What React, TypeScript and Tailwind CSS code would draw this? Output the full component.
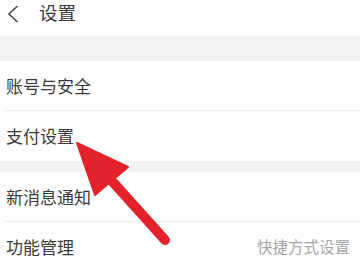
const rowText = 'text-[17px] text-[#3a3a3a]';

function Row({ label, right, divider }: { label: string; right?: string; divider?: boolean }) {
  return (
    <div className="flex h-[50px] flex-col">
      <div className="flex flex-1 items-center justify-between pl-[6px] pr-[10px]">
        <span className={rowText}>{label}</span>
        {right && <span className="text-[15.5px] text-[#a6a6a6]">{right}</span>}
      </div>
      {divider && <div className="ml-[5px] h-px bg-[#ececec]" />}
    </div>
  );
}

export default function App() {
  return (
    <div
      className="relative h-[270px] w-[360px] overflow-hidden bg-white"
      style={{ fontFamily: '"Noto Sans CJK SC", "Noto Sans", sans-serif' }}
    >
      <div className="flex h-[36px] items-center gap-[20px] pl-[7px]">
        <svg width="12" height="18" viewBox="0 0 12 18" className="-mt-[8px]">
          <path d="M10.5 1 L2 9 L10.5 17" fill="none" stroke="#4a4a4a" strokeWidth="1.6" />
        </svg>
        <span className="-mt-[10px] text-[18.5px] text-[#3a3a3a]">设置</span>
      </div>
      <div className="h-[25px] bg-[#f3f3f3]" />
      <Row label="账号与安全" divider />
      <Row label="支付设置" />
      <div className="h-[11px] bg-[#f3f3f3]" />
      <Row label="新消息通知" divider />
      <Row label="功能管理" right="快捷方式设置" />

      <svg className="pointer-events-none absolute left-0 top-0" width="360" height="270" viewBox="0 0 360 270">
        <line x1="112" y1="181" x2="165" y2="240" stroke="#e3222b" strokeWidth="10" strokeLinecap="round" />
        <polygon points="77,143 128,167 95,195" fill="#e3222b" stroke="#e3222b" strokeWidth="2" strokeLinejoin="round" />
      </svg>
    </div>
  );
}
